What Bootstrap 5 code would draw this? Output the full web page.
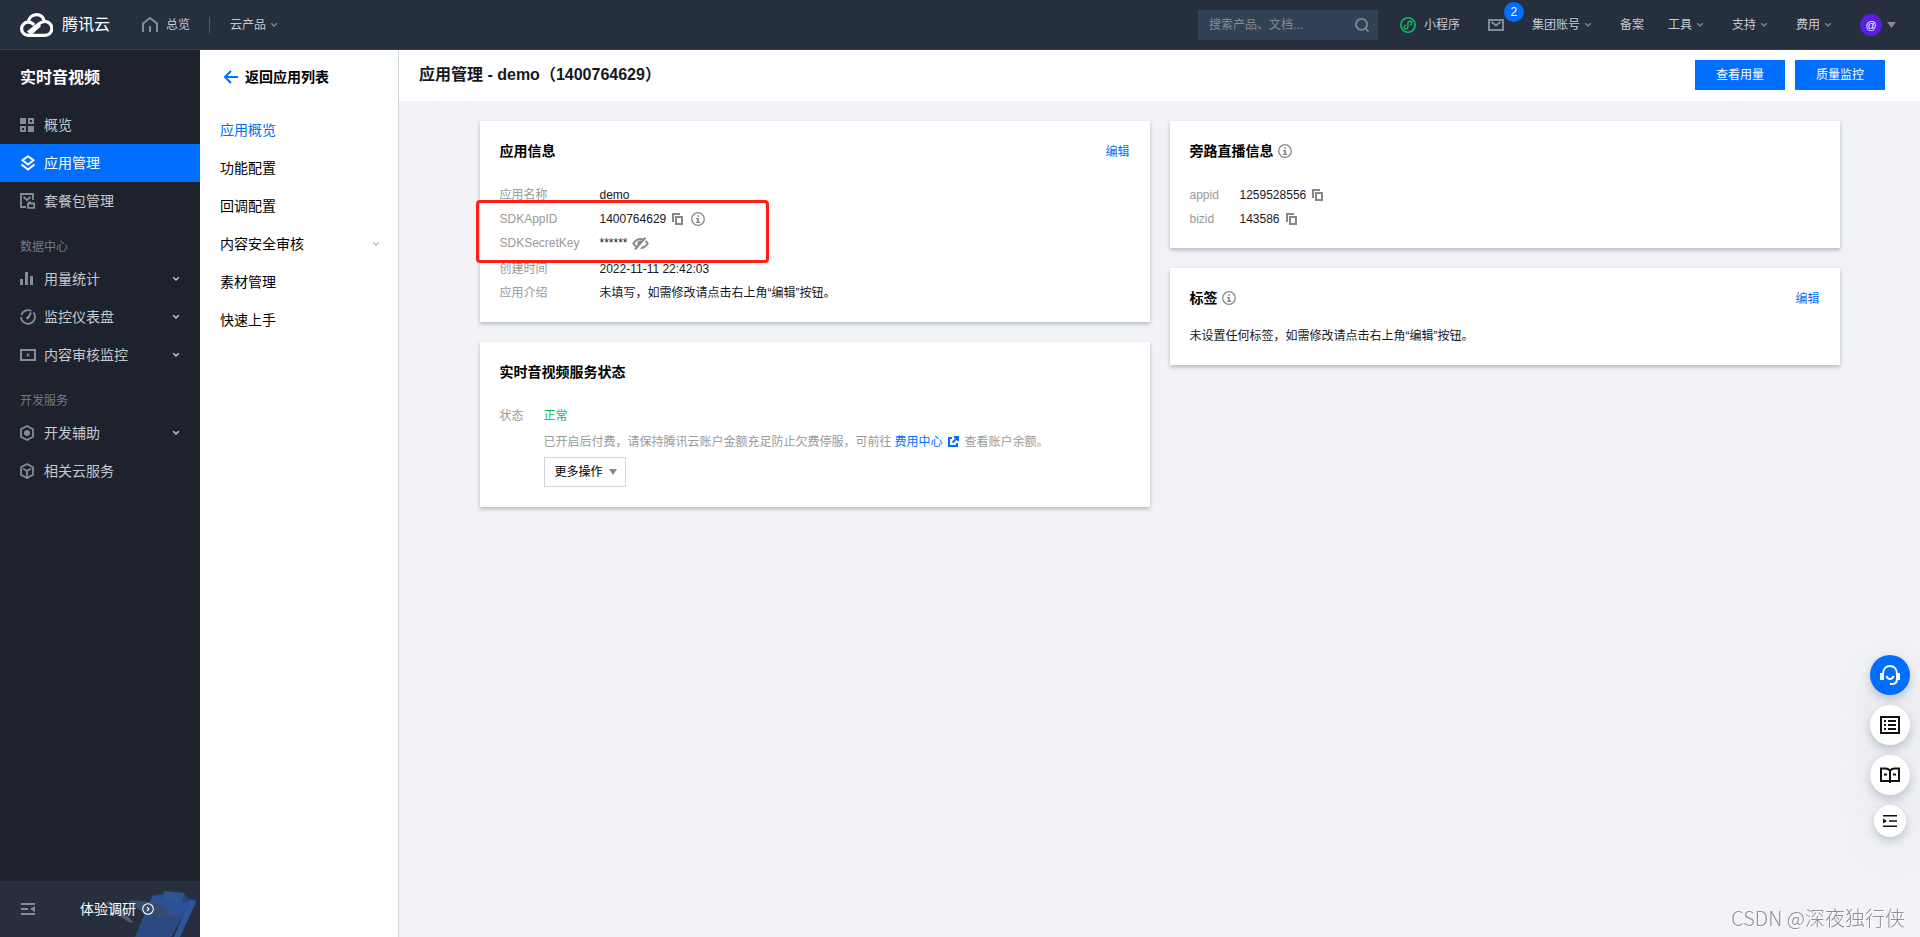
<!DOCTYPE html>
<html lang="zh-CN">
<head>
<meta charset="utf-8">
<meta name="viewport" content="width=device-width, initial-scale=1">
<title>应用管理 - 实时音视频</title>
<link href="https://cdn.jsdelivr.net/npm/bootstrap@5.3.0/dist/css/bootstrap.min.css" rel="stylesheet">
<style>
  :root { --blue: #006eff; --navy: #262f3e; --ink: #1e222d; --icon: #818d97; }
  body { font-family: "Liberation Sans", "Noto Sans CJK SC", sans-serif; font-size: 12px; line-height: 24px; color: #16181d; background: #f2f3f7; }
  a { text-decoration: none; color: var(--blue); }
  svg { flex: none; display: block; }

  .topbar { height: 50px; background: var(--navy); border-bottom: 1px solid #364153; padding: 0 24px 0 20px; color: #c4c9d0; }
  .topbar a { color: #c4c9d0; }
  .brand-name { font-size: 16px; color: #fff !important; gap: 9px; }
  .top-divider { width: 1px; height: 16px; background: #515b69; margin: 0 16px 0 19px; }
  .chev { width: 16px; height: 16px; }
  .topbar .chev { color: #7d8590; }
  .search { width: 180px; height: 30px; background: #334156; padding: 0 8px 0 11px; margin-right: 22px; }
  .search input { background: none; border: 0; outline: 0; width: 100%; min-width: 0; color: #fff; font-size: 12px; padding: 0; }
  .search input::placeholder { color: #858b95; opacity: 1; }
  .search button { border: 0; background: none; padding: 0; color: #858b95; }
  .menus { gap: 24px; }
  .account { gap: 5px; }
  .mail { margin: 0 28px; }
  .count { position: absolute; left: 16px; top: -17px; width: 20px; height: 20px; border-radius: 50%; background: var(--blue); color: #fff; line-height: 20px; text-align: center; }
  .avatar { width: 22px; height: 22px; border-radius: 50%; background: #5a1ee0; color: #fff; line-height: 22px; text-align: center; font-size: 11px; }

  .side { width: 200px; background: var(--ink); flex: none; }
  .side-title { font-size: 16px; font-weight: 700; color: #fff; height: 56px; padding: 0 20px; margin: 0; }
  .side a.entry { height: 38px; padding: 0 16px 0 20px; font-size: 14px; color: #c4c9d0; }
  .side a.entry > svg:first-child { margin-right: 8px; color: var(--icon); }
  .side a.entry.active { background: var(--blue); color: #fff; }
  .side a.entry.active > svg:first-child { color: #fff; }
  .side-group { height: 40px; padding: 15px 20px 0; color: #6f7a84; margin: 0; font-size: 12px; line-height: 24px; font-weight: 400; }
  .side-foot { height: 56px; background: #272f3e; position: relative; }
  .side-foot .art { position: absolute; right: 0; bottom: 0; }
  .side-foot a { color: #fff; font-size: 14px; position: relative; gap: 6px; margin-left: 45px; }
  .side-foot button { border: 0; background: none; padding: 0; margin-left: 20px; color: var(--icon); }

  .submenu { width: 199px; background: #fff; border-right: 1px solid #cfd5de; flex: none; }
  .submenu .back { height: 53px; padding-left: 23px; font-size: 14px; font-weight: 700; color: #000; gap: 6px; margin-bottom: 8px; }
  .submenu .back svg { color: var(--blue); }
  .submenu .sub { height: 38px; padding: 0 14px 0 20px; font-size: 14px; color: #000; }
  .submenu .sub.active { color: var(--blue); }
  .submenu .chev { color: #bcc2c8; }

  .pagehead { height: 51px; background: #fff; padding: 0 35px 2px 20px; }
  .pagehead h1 { font-size: 16px; line-height: 24px; font-weight: 700; margin: 0; }
  .head-actions { gap: 10px; }
  .btn-blue { width: 90px; height: 30px; background: var(--blue); color: #fff; border: 0; border-radius: 0; font-size: 12px; padding: 0; }
  .btn-blue:hover { background: #0063e5; color: #fff; }
  .panels { max-width: 1400px; padding: 20px; gap: 20px; }
  .stack { flex: 1 1 0; min-width: 0; gap: 20px; }
  .panel { background: #fff; padding: 20px 20px 17px; box-shadow: 0 2px 4px rgba(54,58,80,.32); }
  .panel h2 { font-size: 14px; line-height: 20px; font-weight: 700; margin: 0; color: #000; }
  .panel-top { height: 20px; margin-bottom: 22px; }
  .panel-top > a { padding-top: 2px; }
  .panel-top.tight { margin-bottom: 16px; }
  .tone { color: #888; }
  dl { margin: 0; }
  dt { font-weight: 400; color: #999; flex: none; }
  dd { margin: 0; }
  .wide dt { width: 100px; }
  .narrow dt { width: 50px; }
  .state dt { width: 44px; }
  .gap-secret { padding-bottom: 2px; }
  .mark-frame { position: absolute; left: -24px; top: 17px; width: 293px; height: 63px; border: 3px solid #ff2014; border-radius: 4px; pointer-events: none; }
  .status-ok { color: #0abf5b; }
  .hint { color: #999; margin-top: 2px; margin-bottom: 3px; }
  .hint a { gap: 4px; margin: 0 6px 0 3px; }
  .btn-more { height: 30px; border: 1px solid #cfd5de; border-radius: 0; background: #fff; font-size: 12px; color: #000; padding: 0 8px 0 10px; gap: 6px; margin-bottom: 3px; }

  .floats { position: fixed; right: 10px; bottom: 100px; gap: 10px; }
  .floats button { width: 40px; height: 40px; border: 0; border-radius: 50%; background: #fff; color: #111; padding: 0; box-shadow: 0 4px 10px rgba(55,70,100,.26), 0 16px 60px rgba(55,70,100,.12); }
  .floats button.help { background: var(--blue); color: #fff; }
  .floats button.fold { width: 32px; height: 32px; }
  .credit { position: fixed; right: 15px; bottom: 7px; font-size: 20px; line-height: 24px; color: #8d8f93; text-shadow: 1px 1px 0 #fff; font-family: "Noto Sans CJK SC", sans-serif; font-weight: 300; }
</style>
</head>
<body class="min-vh-100 d-flex flex-column">

<svg width="0" height="0" class="position-absolute" aria-hidden="true">
  <symbol id="chev" viewBox="0 0 16 16"><path d="M5.2 6.300 8 9l2.800-2.700" fill="none" stroke="currentColor" stroke-width="1.500"/></symbol>
  <symbol id="copy" viewBox="0 0 11 12"><path d="M0 0h8v2H2v7H0z" fill="currentColor"/><path d="M4 4h6v7H4z" fill="none" stroke="currentColor" stroke-width="2"/></symbol>
  <symbol id="info" viewBox="0 0 14 14"><circle cx="7" cy="7" r="6.3" fill="none" stroke="currentColor" stroke-width="1.3"/><path d="M6.2 3.2h1.7v1.6H6.2zM5 6h2.9v3.7H9.2v1.2H4.9V9.7h1.3V7.2H5z" fill="currentColor"/></symbol>
</svg>

<header class="topbar d-flex align-items-center">
  <a href="#" class="brand-name d-flex align-items-center">
    <svg width="33" height="24" viewBox="0 0 33 24" fill="none" stroke="#fff" stroke-width="3.2"><path d="M8 19.500 19 10.800C21 9.200 22.800 8.500 25 8.500a6.800 6.800 0 0 1 0 13.800H8.200a6.600 6.600 0 0 1 0-13.200c2.500 0 4.200 1 6 2.800"/><path d="M8.300 9.500C8.800 4.800 12 1.700 16.500 1.700c3.800 0 6.800 2.500 7.900 6.500"/><path d="m10 21 10-9"/></svg>
    <span>腾讯云</span>
  </a>
  <a href="#" class="d-flex align-items-center gap-2 ms-4 ps-2">
    <svg width="16" height="15" viewBox="0 0 16 15" fill="none" stroke="#818d97" stroke-width="2"><path d="M1 15V6.500L8 1l7 5.500V15M8 9v6"/></svg>
    <span>总览</span>
  </a>
  <span class="top-divider"></span>
  <a href="#" class="d-flex align-items-center ps-1"><span>云产品</span><svg class="chev"><use href="#chev"/></svg></a>

  <form class="search d-flex align-items-center ms-auto" role="search">
    <input type="text" placeholder="搜索产品、文档..." aria-label="搜索产品、文档">
    <button type="button" aria-label="搜索"><svg width="16" height="16" viewBox="0 0 16 16" fill="none" stroke="currentColor" stroke-width="1.700"><circle cx="7.500" cy="7.300" r="5.500"/><path d="m11.500 11.300 3 3.500"/></svg></button>
  </form>
  <a href="#" class="d-flex align-items-center gap-2">
    <svg width="16" height="16" viewBox="0 0 16 16" fill="none" stroke="#0abf5b"><circle cx="8" cy="8" r="7.200" stroke-width="1.600"/><path d="M6.200 7.900C3.500 8.400 3.400 11.700 5.800 11.700c1.400 0 2.100-.9 2.100-2V6.200c0-1.100.8-2 2.200-2 2.400 0 2.300 3.300-.3 3.900" stroke-width="1.400"/></svg>
    <span>小程序</span>
  </a>
  <a href="#" class="mail position-relative" aria-label="消息">
    <svg width="16" height="12" viewBox="0 0 16 12" fill="none" stroke="#818d97" stroke-width="2"><path d="M1 1h14v10H1zM3.500 3 8 6.500 12.500 3"/></svg>
    <span class="count">2</span>
  </a>
  <nav class="menus d-flex align-items-center">
    <a href="#" class="d-flex align-items-center">集团账号<svg class="chev"><use href="#chev"/></svg></a>
    <a href="#">备案</a>
    <a href="#" class="d-flex align-items-center">工具<svg class="chev"><use href="#chev"/></svg></a>
    <a href="#" class="d-flex align-items-center">支持<svg class="chev"><use href="#chev"/></svg></a>
    <a href="#" class="d-flex align-items-center">费用<svg class="chev"><use href="#chev"/></svg></a>
    <a href="#" class="account d-flex align-items-center"><span class="avatar">@</span><svg width="9" height="6" viewBox="0 0 9 6"><path d="M0 0h9L4.500 6z" fill="#888"/></svg></a>
  </nav>
</header>

<div class="d-flex flex-grow-1">
  <aside class="side d-flex flex-column">
    <h2 class="side-title d-flex align-items-center">实时音视频</h2>
    <a href="#" class="entry d-flex align-items-center">
      <svg width="16" height="16" viewBox="0 0 16 16" fill="currentColor"><path d="M0 1h6v6H0zM8 1h6v6H8zm2 2v2h2V3zM0 9h6v6H0zm2 2v2h2v-2zM8 9h6v6H8z" fill-rule="evenodd"/></svg>概览</a>
    <a href="#" class="entry active d-flex align-items-center">
      <svg width="16" height="16" viewBox="0 0 16 16" fill="none" stroke="currentColor" stroke-width="2"><path d="m8 1.300 5.500 4L8 9.500l-5.500-4.200z"/><path d="m1.500 9.500 6.500 5 6.500-5"/></svg>应用管理</a>
    <a href="#" class="entry d-flex align-items-center">
      <svg width="16" height="16" viewBox="0 0 16 16" fill="none" stroke="currentColor" stroke-width="1.800"><path d="M6 14H1V1h12v6"/><path d="m3.500 4 3.500 3 3.500-3"/><path d="M8 10.500h6.200v4.300H8zM8 9.500h3"/></svg>套餐包管理</a>
    <h3 class="side-group">数据中心</h3>
    <a href="#" class="entry d-flex align-items-center">
      <svg width="16" height="16" viewBox="0 0 16 16" fill="currentColor"><path d="M0 8h3v6H0zM5 1h3v13H5zM10 5h3v9h-3z"/></svg>用量统计<svg class="chev ms-auto"><use href="#chev"/></svg></a>
    <a href="#" class="entry d-flex align-items-center">
      <svg width="16" height="16" viewBox="0 0 16 16" fill="none" stroke="currentColor" stroke-width="1.800"><path d="M13.500 3.500A7 7 0 1 1 1 8M1.300 6A7 7 0 0 1 11.300 1.900"/><path d="m8 9 3-5.500" stroke-width="2"/><circle cx="7.700" cy="8.800" r="1.600" fill="currentColor" stroke="none"/></svg>监控仪表盘<svg class="chev ms-auto"><use href="#chev"/></svg></a>
    <a href="#" class="entry d-flex align-items-center">
      <svg width="16" height="16" viewBox="0 0 16 16" fill="none" stroke="currentColor" stroke-width="2"><path d="M1 3h14v10H1z"/><path d="M7 6v4l3-2z" fill="currentColor" stroke="none"/></svg>内容审核监控<svg class="chev ms-auto"><use href="#chev"/></svg></a>
    <h3 class="side-group">开发服务</h3>
    <a href="#" class="entry d-flex align-items-center">
      <svg width="16" height="16" viewBox="0 0 16 16" fill="none" stroke="currentColor" stroke-width="1.800"><path d="m7 1 6 3.300v7.400L7 15l-6-3.300V4.300z"/><path d="m7 4.800 3 1.600v3.200l-3 1.600-3-1.600V6.400z" fill="currentColor" stroke="none"/></svg>开发辅助<svg class="chev ms-auto"><use href="#chev"/></svg></a>
    <a href="#" class="entry d-flex align-items-center">
      <svg width="16" height="16" viewBox="0 0 16 16" fill="none" stroke="currentColor" stroke-width="1.800"><path d="m7 1 6 3.300v7.400L7 15l-6-3.300V4.300z"/><path d="M3 5.500 7 8l4-2.500M7 8v6"/></svg>相关云服务</a>
    <div class="side-foot mt-auto d-flex align-items-center">
      <svg class="art" width="96" height="56" viewBox="0 0 96 56">
        <path d="M2 22l3-2 13 9 12 13-6-1-12-9z" fill="#4c596f"/>
        <path d="M31 56 48 15l9-2 31 6-21 37z" fill="#2b4a82"/>
        <path d="m91 19-5-1-16 38h6l16-35z" fill="#2f5596"/>
        <path d="M48 15h8l31 4c-4 11-11 18-22 17l-16-9z" fill="#2c5198"/>
        <path d="M24 20c12-2 24 2 33 3 6 5 8 12 15 13-16 1-22-4-35-6z" fill="#384c70"/>
        <path d="m60 10 20 2 6 8-9 2-21-2z" fill="#24447f"/>
        <path d="m60 10 20 2-2 10-20-2z" fill="#2f5290"/>
      </svg>
      <button type="button" class="position-relative" aria-label="收起菜单"><svg width="15" height="12" viewBox="0 0 15 12" fill="currentColor"><path d="M1 0h14v2H1zM1 5h7v2H1zM1 10h14v2H1zM10 6l5-3v6z"/></svg></button>
      <a href="#" class="d-flex align-items-center">体验调研<svg width="12" height="12" viewBox="0 0 12 12" fill="none" stroke="currentColor" stroke-width="1.100"><circle cx="6" cy="6" r="5.300"/><path d="m5 4 2 2-2 2"/></svg></a>
    </div>
  </aside>

  <nav class="submenu">
    <a href="#" class="back d-flex align-items-center"><svg width="16" height="16" viewBox="0 0 16 16" fill="none" stroke="currentColor" stroke-width="2"><path d="M8 2 2 8l6 6M2 8h13"/></svg>返回应用列表</a>
    <a href="#" class="sub active d-flex align-items-center">应用概览</a>
    <a href="#" class="sub d-flex align-items-center">功能配置</a>
    <a href="#" class="sub d-flex align-items-center">回调配置</a>
    <a href="#" class="sub d-flex align-items-center">内容安全审核<svg class="chev ms-auto"><use href="#chev"/></svg></a>
    <a href="#" class="sub d-flex align-items-center">素材管理</a>
    <a href="#" class="sub d-flex align-items-center">快速上手</a>
  </nav>

  <main class="flex-grow-1">
    <div class="pagehead d-flex align-items-center">
      <h1>应用管理 - demo（1400764629）</h1>
      <div class="head-actions ms-auto d-flex">
        <button type="button" class="btn btn-blue">查看用量</button>
        <button type="button" class="btn btn-blue">质量监控</button>
      </div>
    </div>
    <div class="panels d-flex align-items-start mx-auto">
      <div class="stack d-flex flex-column">
        <section class="panel">
          <div class="panel-top d-flex align-items-center justify-content-between"><h2>应用信息</h2><a href="#">编辑</a></div>
          <dl class="wide position-relative">
            <div class="d-flex"><dt>应用名称</dt><dd>demo</dd></div>
            <div class="d-flex"><dt>SDKAppID</dt><dd class="d-flex align-items-center">1400764629
              <svg class="tone ms-1 me-2" width="13" height="12" viewBox="-2 0 13 12"><use href="#copy" width="11" height="12"/></svg>
              <svg class="tone" width="14" height="14"><use href="#info"/></svg></dd></div>
            <div class="d-flex gap-secret"><dt>SDKSecretKey</dt><dd class="d-flex align-items-center">******
              <svg class="tone ms-1" width="17" height="13" viewBox="0 0 17 13" fill="none" stroke="currentColor"><path d="M1.300 6.500C3.500 3.300 5.800 2 8.500 2c2.800 0 5.200 1.300 7.200 4.500-2 3.200-4.400 4.500-7.200 4.500-2.700 0-5-1.300-7.200-4.500z" stroke-width="2"/><circle cx="8.500" cy="6.500" r="2.600" fill="currentColor"/><path d="m5.200 13.500 9.500-14" stroke="#fff" stroke-width="3"/><path d="m3 12.500 10.500-12" stroke-width="2"/></svg></dd></div>
            <div class="d-flex"><dt>创建时间</dt><dd>2022-11-11 22:42:03</dd></div>
            <div class="d-flex"><dt>应用介绍</dt><dd>未填写，如需修改请点击右上角“编辑”按钮。</dd></div>
            <div class="mark-frame"></div>
          </dl>
        </section>
        <section class="panel">
          <div class="panel-top d-flex align-items-center"><h2>实时音视频服务状态</h2></div>
          <dl class="state d-flex">
            <dt>状态</dt>
            <dd>
              <div class="status-ok">正常</div>
              <div class="hint d-flex align-items-center">已开启后付费，请保持腾讯云账户金额充足防止欠费停服，可前往<a href="#" class="d-flex align-items-center">费用中心<svg width="12" height="12" viewBox="0 0 12 12" fill="none" stroke="currentColor" stroke-width="2"><path d="M5 2H2v8h8V7M7 1h4v4M11 1 5.500 6.500"/></svg></a>查看账户余额。</div>
              <button type="button" class="btn btn-more d-flex align-items-center">更多操作<svg width="8" height="6" viewBox="0 0 8 6"><path d="M0 0h8L4 6z" fill="#888"/></svg></button>
            </dd>
          </dl>
        </section>
      </div>
      <div class="stack d-flex flex-column">
        <section class="panel">
          <div class="panel-top d-flex align-items-center"><h2>旁路直播信息</h2><svg class="tone ms-1" width="14" height="14"><use href="#info"/></svg></div>
          <dl class="narrow">
            <div class="d-flex"><dt>appid</dt><dd class="d-flex align-items-center">1259528556<svg class="tone ms-1" width="13" height="12" viewBox="-2 0 13 12"><use href="#copy" width="11" height="12"/></svg></dd></div>
            <div class="d-flex"><dt>bizid</dt><dd class="d-flex align-items-center">143586<svg class="tone ms-1" width="13" height="12" viewBox="-2 0 13 12"><use href="#copy" width="11" height="12"/></svg></dd></div>
          </dl>
        </section>
        <section class="panel">
          <div class="panel-top tight d-flex align-items-center"><h2>标签</h2><svg class="tone ms-1" width="14" height="14"><use href="#info"/></svg><a href="#" class="ms-auto">编辑</a></div>
          <div>未设置任何标签，如需修改请点击右上角“编辑”按钮。</div>
        </section>
      </div>
    </div>
  </main>
</div>

<div class="floats d-flex flex-column align-items-center">
  <button type="button" class="help d-flex align-items-center justify-content-center" aria-label="在线客服"><svg width="20" height="20" viewBox="0 0 20 20" fill="none" stroke="currentColor" stroke-width="2"><path d="M3 9C3 4 6 1 10 1s7 3 7 8v5c0 3-2 5-5 5h-2"/><path d="M6.500 11c1 4 6 4 7 0"/><path d="M0 8h4v7H0zM16 8h4v7h-3z" fill="currentColor" stroke="none"/></svg></button>
  <button type="button" class="d-flex align-items-center justify-content-center" aria-label="列表"><svg width="20" height="18" viewBox="0 0 20 18" fill="currentColor"><path d="M0 0h20v18H0zm2 2v14h16V2z" fill-rule="evenodd"/><path d="M4 4h2v2H4zM8 4h8v2H8zM4 8h2v2H4zM8 8h8v2H8zM4 12h2v2H4zM8 12h8v2H8z"/></svg></button>
  <button type="button" class="d-flex align-items-center justify-content-center" aria-label="文档"><svg width="20" height="17" viewBox="0 0 20 17" fill="none" stroke="currentColor" stroke-width="2"><path d="M10 16V3.500C8.500 2 7 1.500 5.500 1.500H1V14h9M10 3.500c1.500-1.500 3-2 4.500-2H19V14h-9"/><path d="M4 7.500h3M13 7.500h3"/></svg></button>
  <button type="button" class="fold d-flex align-items-center justify-content-center" aria-label="收起"><svg width="14" height="12" viewBox="0 0 14 12" fill="currentColor"><path d="M0 0h14v1.600H0zM6 5.200h8v1.600H6zM0 10.400h14V12H0zM0 3.500 4 6 0 8.500z"/></svg></button>
</div>
<div class="credit">CSDN @深夜独行侠</div>

<script src="https://cdn.jsdelivr.net/npm/bootstrap@5.3.0/dist/js/bootstrap.bundle.min.js"></script>
</body>
</html>
